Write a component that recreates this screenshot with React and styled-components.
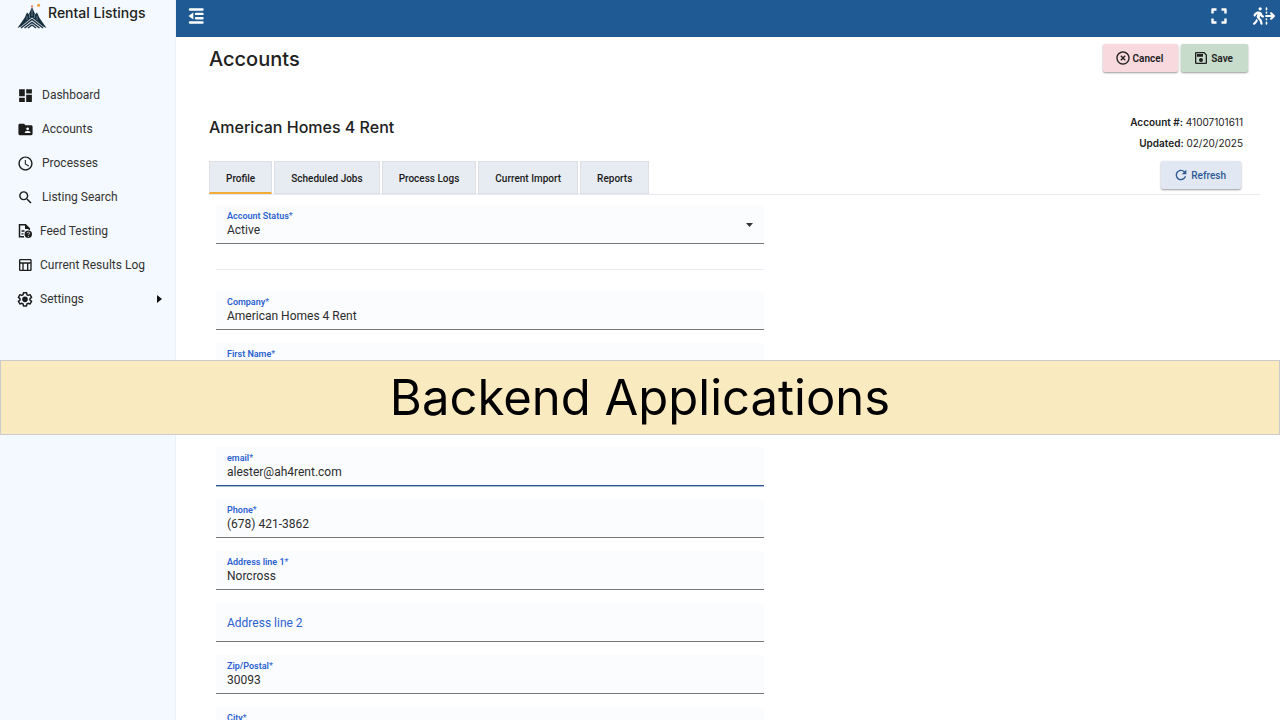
import React from "react";
import styled, { createGlobalStyle, css } from "styled-components";
import {
  MdDashboard,
  MdFolderShared,
  MdAccessTime,
  MdSearch,
  MdOutlineTableChart,
  MdHighlightOff,
  MdOutlineSave,
  MdRefresh,
} from "react-icons/md";
import { FaPersonWalkingDashedLineArrowRight } from "react-icons/fa6";

const GlobalStyle = createGlobalStyle`
  *, *::before, *::after { box-sizing: border-box; }
  body {
    margin: 0;
    background: #fff;
    color: #212121;
    font-family: Roboto, "Liberation Sans", sans-serif;
    font-size: 12px;
  }
  button, input, select { font-family: inherit; }
`;

const ui = css`
  font-family: Inter, "Liberation Sans", sans-serif;
`;

const Shell = styled.div`
  display: grid;
  grid-template-columns: 176px minmax(0, 1fr);
  height: 100vh;
  overflow: hidden;
`;

const Sidebar = styled.aside`
  background: #f3f9fe;
  border-right: 1px solid #eaf1f7;
`;

const Brand = styled.div`
  display: flex;
  align-items: flex-start;
  height: 78px;
  padding: 3px 0 0 16px;
`;

const BrandName = styled.span`
  ${ui}
  font-size: 14px;
  font-weight: 500;
  line-height: 20px;
  white-space: nowrap;
`;

const NavList = styled.ul`
  list-style: none;
  margin: 0;
  padding: 0;
`;

const NavLink = styled.a`
  display: flex;
  align-items: center;
  gap: ${(p) => (p.$tight ? 7 : 8)}px;
  height: 34px;
  padding: 0 13px 0 17px;
  color: #333;
  font-size: 12px;
  text-decoration: none;
  white-space: nowrap;
  svg { flex: none; color: #1c1c1c; }
`;

const NavText = styled.span`
  flex: 1;
`;

const Workspace = styled.div`
  min-width: 0;
  overflow: hidden;
`;

const Topbar = styled.header`
  display: flex;
  align-items: center;
  justify-content: space-between;
  height: 37px;
  padding: 0 5px 5px 12px;
  background: #205a94;
`;

const TopbarGroup = styled.div`
  display: flex;
  align-items: center;
  gap: 26px;
`;

const IconButton = styled.button`
  display: flex;
  padding: 0;
  border: 0;
  background: none;
  color: #fff;
  cursor: pointer;
`;

const Main = styled.main`
  padding: 7px 20px 0 33px;
`;

const Row = styled.div`
  display: flex;
  align-items: flex-start;
  justify-content: space-between;
`;

const TitleRow = styled(Row)`
  height: 68px;
  padding-right: 12px;
`;

const PageTitle = styled.h1`
  ${ui}
  margin: 0;
  font-size: 20px;
  font-weight: 500;
  line-height: 30px;
`;

const AccountName = styled.h2`
  ${ui}
  margin: 0;
  font-size: 16px;
  font-weight: 500;
  line-height: 30px;
`;

const Actions = styled.div`
  display: flex;
  gap: 3px;
`;

const tones = {
  cancel: css`background: #f8d9de; color: #212121;`,
  save: css`background: #c8dccb; color: #212121;`,
  refresh: css`background: #e1e8f4; color: #2f5a92; font-weight: 500;`,
};

const ActionButton = styled.button`
  display: flex;
  align-items: center;
  gap: 2px;
  height: 28px;
  padding: 0 15px 0 12px;
  border: 0;
  border-radius: 2px;
  box-shadow: 0 1px 2px rgba(0, 0, 0, 0.4);
  font-size: 10px;
  font-weight: 600;
  cursor: pointer;
  ${(p) => tones[p.$tone]}
`;

const AccountMeta = styled.dl`
  ${ui}
  margin: 0;
  padding-right: 17px;
  font-size: 10px;
  line-height: 21px;
  text-align: right;
`;

const MetaItem = styled.div`
  dt, dd { display: inline; margin: 0; }
  dt { font-weight: 600; }
`;

const AccountRow = styled(Row)`
  height: 49px;
`;

const TabBar = styled(Row)`
  height: 34px;
  border-bottom: 1px solid #e6e9f4;
  padding-right: 19px;
`;

const Tabs = styled.div`
  display: flex;
  gap: 2px;
`;

const Tab = styled.button`
  height: 33px;
  padding: ${(p) => (p.$active ? 2 : 1)}px 16px 0;
  border: 1px solid #dcdfe4;
  border-bottom: ${(p) => (p.$active ? "2px solid #f2ab33" : "1px solid #dcdfe4")};
  background: #e7ecf3;
  color: #1a1a1a;
  font-size: 10px;
  font-weight: 500;
  white-space: nowrap;
  cursor: pointer;
`;

const Form = styled.form`
  display: flex;
  flex-direction: column;
  gap: 13px;
  max-width: 555px;
  padding: 10px 0 0 7px;
`;

const Divider = styled.hr`
  width: 100%;
  margin: 12px 0 8px;
  border: 0;
  border-top: 1px solid #e6ebf7;
`;

const FieldBox = styled.div`
  position: relative;
  display: flex;
  flex-direction: column;
  height: 39px;
  padding: ${(p) => (p.$empty ? 0 : 5)}px 11px 0;
  border-bottom: 1px solid ${(p) => (p.$focused ? "#2f5590" : "#77787c")};
  border-radius: 3px 3px 0 0;
  box-shadow: ${(p) => (p.$focused ? "0 1px 0 #a9bbd6" : "none")};
  background: #fbfcfe;
`;

const Label = styled.label`
  color: #2b62cf;
  font-size: ${(p) => (p.$empty ? 12 : 9)}px;
  font-weight: ${(p) => (p.$empty ? 400 : 600)};
  line-height: ${(p) => (p.$empty ? 40 : 12)}px;
  span { font-weight: 400; }
`;

const control = css`
  width: 100%;
  height: 16px;
  padding: 0;
  border: 0;
  outline: 0;
  background: none;
  color: #2c2c2c;
  font-size: 12px;
  line-height: 16px;
`;

const Input = styled.input`
  ${control}
  ${(p) => p.$empty && css`position: absolute; inset: 0; height: 100%; padding: 0 11px;`}
`;

const Select = styled.select`
  ${control}
  appearance: none;
`;

const Caret = styled.svg`
  position: absolute;
  right: 11px;
  top: 18px;
  pointer-events: none;
`;

const Banner = styled.div`
  ${ui}
  position: fixed;
  top: 50%;
  left: 0;
  right: 0;
  display: flex;
  align-items: center;
  justify-content: center;
  height: 75px;
  border: 1px solid #cbcbcb;
  background: #faeac0;
  color: #000;
  font-size: 49px;
  white-space: nowrap;
`;

function Logo() {
  return (
    <svg width="32" height="27" viewBox="0 0 32 27" aria-hidden="true">
      <path
        d="M1.500 25 8.500 15 11 9.500l1.800 1.800L16 4l3.200 7.300L21 9.500l2.500 5.500 7 10-3.500-1.500-11-9-11 9z"
        fill="#16303f"
      />
      <path d="M16 6v7M13.500 11v4M18.500 11v4M11 13v4M21 13v4" stroke="#8fa3ae" strokeWidth=".6" />
      <g fill="none" stroke="#16303f" strokeWidth="1.400">
        <path d="m5 25 11-8.500L27 25" />
        <path d="m8.500 25 7.500-5.600 7.500 5.600" />
        <path d="m12 25 4-3 4 3" />
      </g>
      <circle cx="16" cy="3.300" r="1.100" fill="#e07a55" />
      <circle cx="22.600" cy="2.300" r="1.500" fill="#f39a35" />
    </svg>
  );
}

function FeedIcon() {
  return (
    <svg width="16" height="16" viewBox="0 0 16 16" aria-hidden="true">
      <path d="M7 13.700H2.500V1.700h6l3.800 3.800V7" fill="none" stroke="currentColor" strokeWidth="1.500" />
      <path d="M8 1v5h5z" fill="currentColor" />
      <path d="M4.500 8h3M4.500 10.800h2" stroke="currentColor" strokeWidth="1.300" />
      <circle cx="11.300" cy="11.300" r="3.700" fill="currentColor" />
      <path d="M10 10.300c.1-1.600 2.700-1.500 2.600 0 0 .9-1.200.9-1.200 1.900m0 .8v.9" fill="none" stroke="#f3f9fe" strokeWidth=".8" />
    </svg>
  );
}

function GearIcon() {
  return (
    <svg width="16" height="16" viewBox="0 0 24 24" aria-hidden="true">
      <path
        d="M9.700 2.500h4.600l.5 3 1.900 1.100 2.900-1.100 2.300 4-2.400 1.900v2.200l2.400 1.900-2.300 4-2.900-1.100-1.900 1.100-.5 3H9.700l-.5-3-1.900-1.100-2.900 1.100-2.300-4 2.400-1.900v-2.200L2.100 9.500l2.300-4 2.900 1.100 1.900-1.100z"
        fill="none"
        stroke="currentColor"
        strokeWidth="2.200"
        strokeLinejoin="round"
      />
      <circle cx="12" cy="12.500" r="4.200" fill="currentColor" />
    </svg>
  );
}

function CollapseIcon() {
  return (
    <svg width="16" height="16" viewBox="0 0 16 16" aria-hidden="true">
      <path d="M2 1.500h12.500M8 5.900h6.500M8 10.200h6.500M2 14.500h12.500" stroke="currentColor" strokeWidth="2.400" strokeLinecap="round" />
      <path d="M.5 8l4.800-3.600v7.200z" fill="currentColor" />
    </svg>
  );
}

function ExpandIcon() {
  return (
    <svg width="16" height="16" viewBox="0 0 16 16" aria-hidden="true">
      <path
        d="M1.500 5.500v-4h4M10.500 1.500h4v4M14.500 10.500v4h-4M5.500 14.500h-4v-4"
        fill="none"
        stroke="currentColor"
        strokeWidth="2.400"
        strokeLinejoin="round"
      />
    </svg>
  );
}

const navItems = [
  { label: "Dashboard", icon: <MdDashboard size={17} /> },
  { label: "Accounts", icon: <MdFolderShared size={17} /> },
  { label: "Processes", icon: <MdAccessTime size={17} /> },
  { label: "Listing Search", icon: <MdSearch size={17} /> },
  { label: "Feed Testing", icon: <FeedIcon />, tight: true },
  { label: "Current Results Log", icon: <MdOutlineTableChart size={16} />, tight: true },
  { label: "Settings", icon: <GearIcon />, tight: true, expandable: true },
];

const tabs = ["Profile", "Scheduled Jobs", "Process Logs", "Current Import", "Reports"];

const fields = [
  { id: "company", label: "Company", value: "American Homes 4 Rent", required: true },
  { id: "first-name", label: "First Name", value: "", required: true },
  { id: "last-name", label: "Last Name", value: "", required: true },
  { id: "email", label: "email", value: "alester@ah4rent.com", required: true, focused: true },
  { id: "phone", label: "Phone", value: "(678) 421-3862", required: true },
  { id: "address-1", label: "Address line 1", value: "Norcross", required: true },
  { id: "address-2", label: "Address line 2", value: "", empty: true },
  { id: "zip", label: "Zip/Postal", value: "30093", required: true },
  { id: "city", label: "City", value: "", required: true },
];

function Field({ id, label, value, required, focused, empty }) {
  return (
    <FieldBox $focused={focused} $empty={empty}>
      <Label htmlFor={id} $empty={empty}>
        {label}
        {required && <span>*</span>}
      </Label>
      <Input id={id} defaultValue={value} $empty={empty} />
    </FieldBox>
  );
}

export default function App() {
  return (
    <>
      <GlobalStyle />
      <Shell>
        <Sidebar>
          <Brand>
            <Logo />
            <BrandName>Rental Listings</BrandName>
          </Brand>
          <nav>
            <NavList>
              {navItems.map((item) => (
                <li key={item.label}>
                  <NavLink href="#" $tight={item.tight}>
                    {item.icon}
                    <NavText>{item.label}</NavText>
                    {item.expandable && (
                      <svg width="5" height="8" viewBox="0 0 5 8" aria-hidden="true">
                        <path d="M0 0l5 4-5 4z" fill="#111" />
                      </svg>
                    )}
                  </NavLink>
                </li>
              ))}
            </NavList>
          </nav>
        </Sidebar>
        <Workspace>
          <Topbar>
            <IconButton aria-label="Collapse menu">
              <CollapseIcon />
            </IconButton>
            <TopbarGroup>
              <IconButton aria-label="Full screen">
                <ExpandIcon />
              </IconButton>
              <IconButton aria-label="Log out">
                <FaPersonWalkingDashedLineArrowRight size={22} />
              </IconButton>
            </TopbarGroup>
          </Topbar>
          <Main>
            <TitleRow>
              <PageTitle>Accounts</PageTitle>
              <Actions>
                <ActionButton type="button" $tone="cancel">
                  <MdHighlightOff size={16} />
                  Cancel
                </ActionButton>
                <ActionButton type="button" $tone="save">
                  <MdOutlineSave size={16} />
                  Save
                </ActionButton>
              </Actions>
            </TitleRow>
            <AccountRow>
              <AccountName>American Homes 4 Rent</AccountName>
              <AccountMeta>
                <MetaItem>
                  <dt>Account #:</dt> <dd>41007101611</dd>
                </MetaItem>
                <MetaItem>
                  <dt>Updated:</dt> <dd>02/20/2025</dd>
                </MetaItem>
              </AccountMeta>
            </AccountRow>
            <TabBar>
              <Tabs role="tablist">
                {tabs.map((name, i) => (
                  <Tab key={name} type="button" role="tab" aria-selected={i === 0} $active={i === 0}>
                    {name}
                  </Tab>
                ))}
              </Tabs>
              <ActionButton type="button" $tone="refresh">
                <MdRefresh size={16} />
                Refresh
              </ActionButton>
            </TabBar>
            <Form>
              <FieldBox>
                <Label htmlFor="status">
                  Account Status<span>*</span>
                </Label>
                <Select id="status" defaultValue="Active">
                  <option>Active</option>
                </Select>
                <Caret width="7" height="4" viewBox="0 0 7 4" aria-hidden="true">
                  <path d="M0 0h7L3.500 4z" fill="#333" />
                </Caret>
              </FieldBox>
              <Divider />
              {fields.map((f) => (
                <Field key={f.id} {...f} />
              ))}
            </Form>
          </Main>
        </Workspace>
      </Shell>
      <Banner>Backend Applications</Banner>
    </>
  );
}
